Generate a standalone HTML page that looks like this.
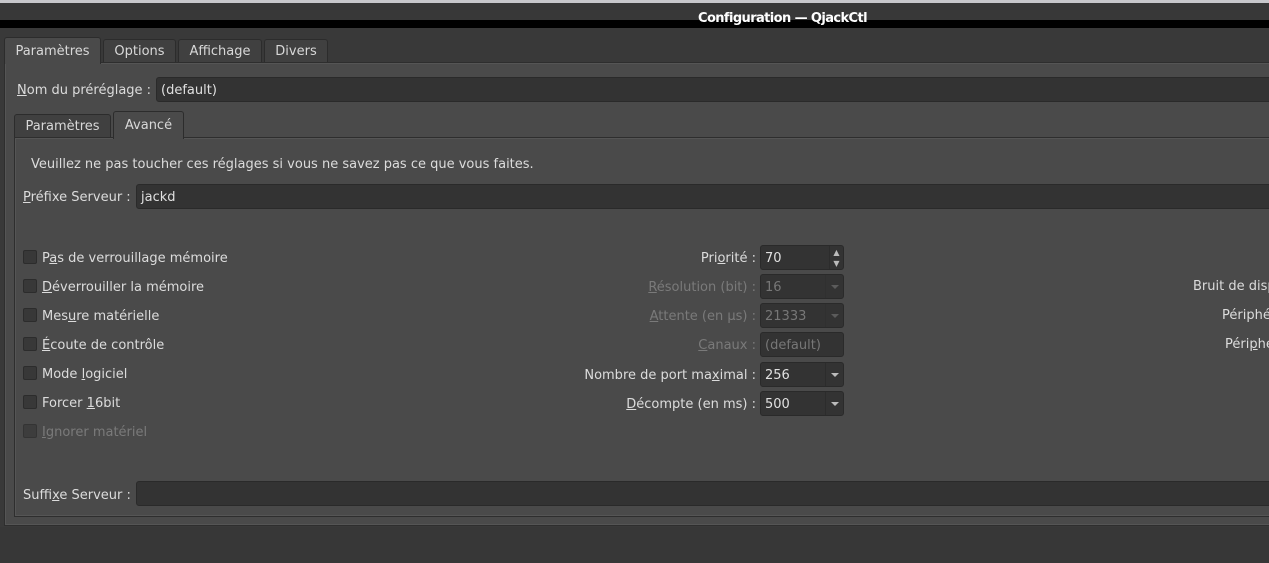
<!DOCTYPE html>
<html><head><meta charset="utf-8"><style>
html,body{margin:0;padding:0}
body{width:1269px;height:563px;overflow:hidden;position:relative;background:#393939;font-family:"DejaVu Sans","Liberation Sans",sans-serif;font-size:13px;color:#dcdcdc}
div,span{position:absolute;box-sizing:border-box}
.t{white-space:nowrap;line-height:16px;transform:translateY(2px)}
.tab{background:#404040;border:1px solid #2c2c2c;border-bottom:none;border-radius:3px 3px 0 0;text-align:center;line-height:24px;color:#d8d8d8}
.sel{background:#4a4a4a;border-color:#2c2c2c}
.panel{background:#4a4a4a;border:1px solid #2e2e2e;box-shadow:inset 0 0 0 1px #555}
.field{background:#333;border:1px solid #2a2a2a;border-radius:3px;padding-left:4px;padding-top:2px;line-height:22px;color:#e0e0e0;overflow:hidden}
.cb{width:14px;height:14px;background:#383838;border:1px solid #2c2c2c;border-radius:2px}
.dis{color:#7a7a7a}
.r{text-align:right}
.arrow{right:0;top:0;width:18px;height:100%;border-left:1px solid #2c2c2c}
.arrow:after{content:"";position:absolute;left:5px;top:10px;border:4px solid transparent;border-top:4px solid #bbb;border-bottom:none}
u{text-decoration:underline}
</style></head><body>
<div style="left:0;top:0;width:1269px;height:3px;background:#c8c8cc"></div>
<div style="left:0;top:3px;width:1269px;height:17px;background:#383838"></div>
<div style="left:0;top:20px;width:1269px;height:8px;background:#000"></div>
<div style="left:698px;top:11px;font-weight:bold;color:#fff;font-size:13px;letter-spacing:-0.6px;white-space:nowrap;line-height:16px">Configuration — QjackCtl</div>

<div class="panel" style="left:4px;top:62px;width:1275px;height:464px"></div>
<div class="tab sel" style="left:4px;top:37px;width:97px;height:27px;line-height:27px">Paramètres</div>
<div class="tab" style="left:103px;top:39px;width:73px;height:23px">Options</div>
<div class="tab" style="left:178px;top:39px;width:84px;height:23px">Affichage</div>
<div class="tab" style="left:264px;top:39px;width:64px;height:23px">Divers</div>

<div class="t" style="left:17px;top:81px"><u>N</u>om du préréglage :</div>
<div class="field" style="left:156px;top:77px;width:1130px;height:25px">(default)</div>

<div class="panel" style="left:14px;top:137px;width:1270px;height:380px"></div>
<div class="tab" style="left:14px;top:114px;width:97px;height:23px">Paramètres</div>
<div class="tab sel" style="left:113px;top:111px;width:71px;height:28px;line-height:27px">Avancé</div>

<div class="t" style="left:31px;top:155px">Veuillez ne pas toucher ces réglages si vous ne savez pas ce que vous faites.</div>
<div class="t" style="left:23px;top:188px"><u>P</u>réfixe Serveur :</div>
<div class="field" style="left:136px;top:184px;width:1150px;height:25px">jackd</div>

<div class="cb" style="left:23px;top:250px"></div><div class="t" style="left:42px;top:249px">P<u>a</u>s de verrouillage mémoire</div>
<div class="cb" style="left:23px;top:279px"></div><div class="t" style="left:42px;top:278px"><u>D</u>éverrouiller la mémoire</div>
<div class="cb" style="left:23px;top:308px"></div><div class="t" style="left:42px;top:307px">Mes<u>u</u>re matérielle</div>
<div class="cb" style="left:23px;top:337px"></div><div class="t" style="left:42px;top:336px"><u>É</u>coute de contrôle</div>
<div class="cb" style="left:23px;top:366px"></div><div class="t" style="left:42px;top:365px">Mode <u>l</u>ogiciel</div>
<div class="cb" style="left:23px;top:395px"></div><div class="t" style="left:42px;top:394px">Forcer <u>1</u>6bit</div>
<div class="cb" style="left:23px;top:424px;opacity:.7"></div><div class="t dis" style="left:42px;top:423px"><u>I</u>gnorer matériel</div>

<div class="t r" style="left:456px;width:300px;top:249px">Pri<u>o</u>rité :</div>
<div class="field" style="left:760px;top:245px;width:84px;height:25px">70<span style="right:0;top:0;width:14px;height:100%;border-left:1px solid #2c2c2c;color:#bbb;font-size:8px;line-height:11px;text-align:center;padding-top:1px">▲<br>▼</span></div>
<div class="t r dis" style="left:456px;width:300px;top:278px"><u>R</u>ésolution (bit) :</div>
<div class="field dis" style="left:760px;top:274px;width:84px;height:25px;color:#777">16<span class="arrow" style="opacity:.3"></span></div>
<div class="t r dis" style="left:456px;width:300px;top:307px"><u>A</u>ttente (en µs) :</div>
<div class="field dis" style="left:760px;top:303px;width:84px;height:25px;color:#777">21333<span class="arrow" style="opacity:.3"></span></div>
<div class="t r dis" style="left:456px;width:300px;top:336px"><u>C</u>anaux :</div>
<div class="field dis" style="left:760px;top:332px;width:84px;height:25px;color:#777">(default)</div>
<div class="t r" style="left:456px;width:300px;top:366px">Nombre de port ma<u>x</u>imal :</div>
<div class="field" style="left:760px;top:362px;width:84px;height:25px">256<span class="arrow"></span></div>
<div class="t r" style="left:456px;width:300px;top:395px"><u>D</u>écompte (en ms) :</div>
<div class="field" style="left:760px;top:391px;width:84px;height:25px">500<span class="arrow"></span></div>

<div class="t" style="left:1193px;top:277px">Bruit de dispersion :</div>
<div class="t" style="left:1222px;top:306px">Périphérique :</div>
<div class="t" style="left:1225px;top:335px">Péri<u>p</u>hérique :</div>

<div class="t" style="left:23px;top:486px">Suffi<u>x</u>e Serveur :</div>
<div class="field" style="left:136px;top:481px;width:1150px;height:25px"></div>
<div style="left:0;top:527px;width:1269px;height:36px;background:#373737"></div>
</body></html>
